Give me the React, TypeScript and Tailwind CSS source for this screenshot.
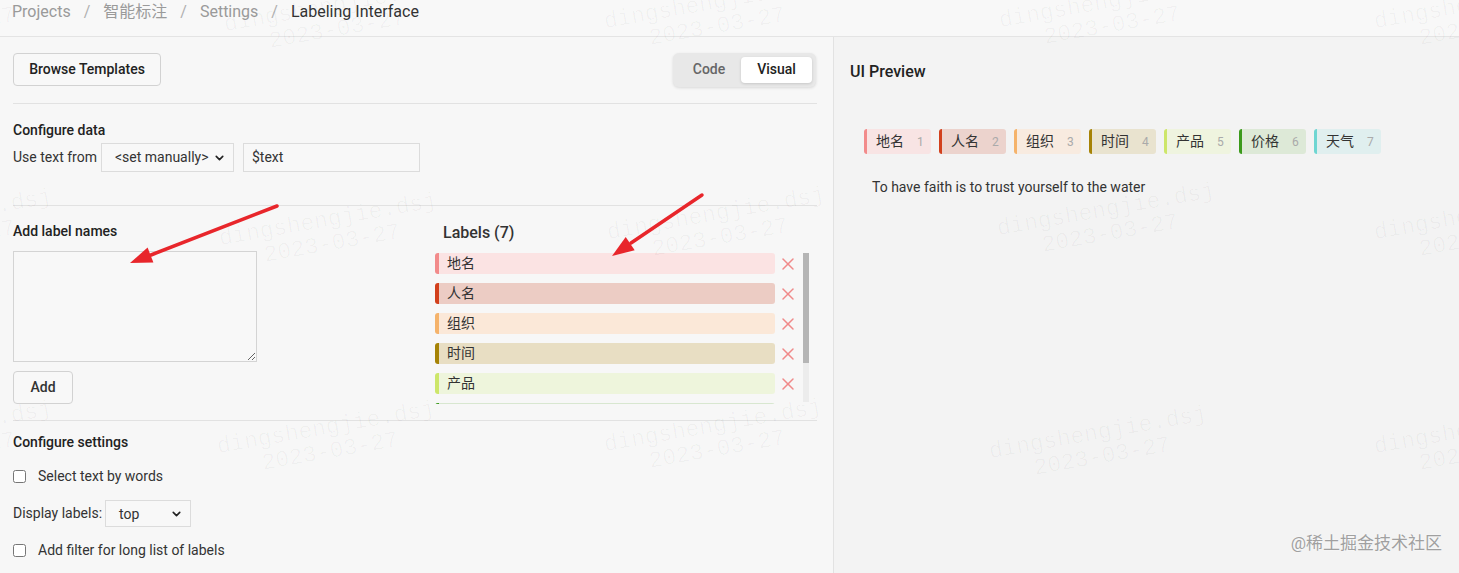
import { X, ChevronDown } from "lucide-react";

type Label = {
  name: string;
  bar: string;
  chip: string;
};

const labels: Label[] = [
  { name: "地名", bar: "border-l-[#f28b8b] bg-[#fbe3e3]", chip: "border-l-[#f28b8b] bg-[#f8e4e4]" },
  { name: "人名", bar: "border-l-[#d2401c] bg-[#ecccc4]", chip: "border-l-[#d2401c] bg-[#ecd3cd]" },
  { name: "组织", bar: "border-l-[#f5b36b] bg-[#fbe8d8]", chip: "border-l-[#f5b36b] bg-[#f8ebe0]" },
  { name: "时间", bar: "border-l-[#a68306] bg-[#e8dec3]", chip: "border-l-[#a68306] bg-[#e9e3cf]" },
  { name: "产品", bar: "border-l-[#cde66a] bg-[#eef5dc]", chip: "border-l-[#cde66a] bg-[#eff4df]" },
  { name: "价格", bar: "border-l-[#3b9a1b] bg-[#d8e7d0]", chip: "border-l-[#3b9a1b] bg-[#dde9d7]" },
  { name: "天气", bar: "border-l-[#6fd6d2] bg-[#dcf1f1]", chip: "border-l-[#6fd6d2] bg-[#e0efef]" },
];

const marks = [
  [-55, 15], [335, 18], [715, 15], [1110, 14], [1485, 15],
  [-55, 228], [330, 232], [718, 226], [1108, 222], [1485, 226],
  [-55, 440], [328, 440], [715, 438], [1100, 445], [1485, 440],
];

function Select({ value, width }: { value: string; width: string }) {
  return (
    <div className={`relative ${width}`}>
      <div className="h-full w-full border border-[#dcdcdc] bg-[#f8f8f8] pl-[13px] text-[14px] leading-[27px] text-[#333]">
        {value}
      </div>
      <ChevronDown className="absolute right-[8px] top-1/2 h-[13px] w-[13px] -translate-y-1/2 text-[#222]" strokeWidth={3} />
    </div>
  );
}

export default function App() {
  return (
    <div className="relative h-[573px] w-[1459px] overflow-hidden bg-[#f7f7f7] font-['Roboto','Noto_Sans_CJK_SC',sans-serif] text-[#222]">
      {/* Breadcrumb */}
      <div className="flex h-[37px] items-start border-b border-[#e4e4e4] bg-[#f8f8f8] pl-[12px] text-[16px] leading-[22px]">
        <div className="mt-[1px] flex items-center">
          <span className="text-[#9a9a9a]">Projects</span>
          <span className="mx-[13px] text-[#b0b0b0]">/</span>
          <span className="text-[#9a9a9a]">智能标注</span>
          <span className="mx-[13px] text-[#b0b0b0]">/</span>
          <span className="text-[#9a9a9a]">Settings</span>
          <span className="mx-[13px] text-[#b0b0b0]">/</span>
          <span className="text-[#333]">Labeling Interface</span>
        </div>
      </div>

      <div className="flex h-[536px]">
        {/* Left: config */}
        <div className="w-[834px] shrink-0 border-r border-[#e2e2e2] bg-[#f7f7f7] pl-[13px] pr-[16px] pt-[16px]">
          <div className="flex h-[33px] items-center justify-between">
            <button className="h-[33px] w-[148px] rounded-[4px] border border-[#d2d2d2] bg-[#f8f8f8] text-[14px] font-medium text-[#222]">
              Browse Templates
            </button>
            <div className="mr-[1px] flex h-[34px] w-[143px] items-center rounded-[6px] bg-[#e8e8e8] p-[4px] shadow-[0_1px_3px_rgba(0,0,0,0.12)]">
              <div className="flex h-full flex-1 items-center justify-center text-[14px] font-medium text-[#666]">Code</div>
              <div className="flex h-full w-[71px] items-center justify-center rounded-[4px] bg-white text-[14px] font-medium text-[#222] shadow-[0_1px_3px_rgba(0,0,0,0.15)]">
                Visual
              </div>
            </div>
          </div>

          <div className="mt-[17px] border-t border-[#e2e2e2]" />

          <div className="mt-[16px] text-[14px] font-medium leading-[20px]">Configure data</div>
          <div className="mt-[3px] flex h-[29px] items-center text-[14px] text-[#333]">
            <span className="mr-[4px]">Use text from</span>
            <Select value="<set manually>" width="h-[29px] w-[133px]" />
            <div className="ml-[9px] h-[29px] w-[177px] border border-[#dcdcdc] bg-[#f8f8f8] pl-[8px] leading-[27px]">$text</div>
          </div>

          <div className="mt-[33px] border-t border-[#e2e2e2]" />

          <div className="flex">
            <div className="w-[422px] shrink-0 pt-[15px]">
              <div className="text-[14px] font-medium leading-[20px]">Add label names</div>
              <textarea className="mt-[10px] block h-[111px] w-[244px] border border-[#d4d4d4] bg-[#f8f8f8]" />
              <button className="mt-[9px] h-[33px] w-[60px] rounded-[4px] border border-[#d2d2d2] bg-[#f8f8f8] text-[14px] font-medium text-[#333]">
                Add
              </button>
            </div>

            <div className="flex-1 pt-[15px]">
              <div className="pl-[8px] text-[16px] font-medium leading-[24px] text-[#333]">Labels (7)</div>
              <div className="mt-[8px] flex">
                <div className="h-[151px] overflow-hidden">
                  {labels.map((l) => (
                    <div key={l.name} className="mb-[9px] flex h-[21px] items-center">
                      <div className={`h-full w-[340px] rounded-[3px] border-l-4 pl-[8px] text-[14px] leading-[21px] text-[#333] ${l.bar}`}>
                        {l.name}
                      </div>
                      <X className="ml-[3px] h-[20px] w-[20px] text-[#f08a8a]" strokeWidth={1.8} />
                    </div>
                  ))}
                </div>
                <div className="ml-[5px] flex h-[149px] w-[6px] flex-col bg-[#ececec]">
                  <div className="h-[110px] bg-[#b5b5b5]" />
                </div>
              </div>
            </div>
          </div>

          <div className="mt-[16px] border-t border-[#e2e2e2]" />

          <div className="mt-[11px] text-[14px] font-medium leading-[20px]">Configure settings</div>
          <label className="mt-[14px] flex items-center text-[14px] leading-[20px] text-[#333]">
            <input type="checkbox" className="m-0 h-[13px] w-[13px]" />
            <span className="ml-[12px]">Select text by words</span>
          </label>
          <div className="mt-[14px] flex h-[27px] items-center text-[14px] text-[#333]">
            <span className="mr-[3px]">Display labels:</span>
            <Select value="top" width="h-[27px] w-[86px]" />
          </div>
          <label className="mt-[13px] flex items-center text-[14px] leading-[20px] text-[#333]">
            <input type="checkbox" className="m-0 h-[13px] w-[13px]" />
            <span className="ml-[12px]">Add filter for long list of labels</span>
          </label>
        </div>

        {/* Right: preview */}
        <div className="flex-1 bg-[#f3f3f3] pl-[16px] pt-[23px]">
          <div className="text-[16px] font-medium leading-[24px] text-[#222]">UI Preview</div>
          <div className="mt-[45px] flex gap-[8px] pl-[14px]">
            {labels.map((l, i) => (
              <div key={l.name} className={`flex h-[25px] w-[67px] items-center rounded-[3px] border-l-[3px] pl-[9px] text-[14px] ${l.chip}`}>
                <span className="text-[#333]">{l.name}</span>
                <span className="ml-[13px] text-[12px] text-[#aaa]">{i + 1}</span>
              </div>
            ))}
          </div>
          <p className="mt-[23px] pl-[22px] text-[14px] leading-[20px] text-[#333]">To have faith is to trust yourself to the water</p>
        </div>
      </div>

      {/* watermark */}
      {marks.map(([x, y], i) => (
        <div
          key={i}
          className="pointer-events-none absolute w-[260px] -translate-x-1/2 -translate-y-1/2 -rotate-[10deg] text-center font-['Liberation_Mono',monospace] text-[23px] leading-[24px] text-black/[0.03]"
          style={{ left: x, top: y }}
        >
          <div>dingshengjie.dsj</div>
          <div>2023-03-27</div>
        </div>
      ))}

      {/* annotation arrows */}
      <svg className="pointer-events-none absolute inset-0" width="1459" height="573">
        <line x1="277" y1="206" x2="151" y2="255" stroke="#e8262b" strokeWidth="3.5" strokeLinecap="round" />
        <polygon points="130,263 153.4,262.6 147.6,247.6" fill="#e8262b" />
        <line x1="702" y1="195" x2="631" y2="243" stroke="#e8262b" strokeWidth="3.5" strokeLinecap="round" />
        <polygon points="612,256 634.7,250.3 625.7,237.1" fill="#e8262b" />
      </svg>

      <div className="pointer-events-none absolute bottom-[17px] right-[17px] text-[17px] text-[#a0a0a0] [text-shadow:0_0_2px_#fff]">
        @稀土掘金技术社区
      </div>
    </div>
  );
}
